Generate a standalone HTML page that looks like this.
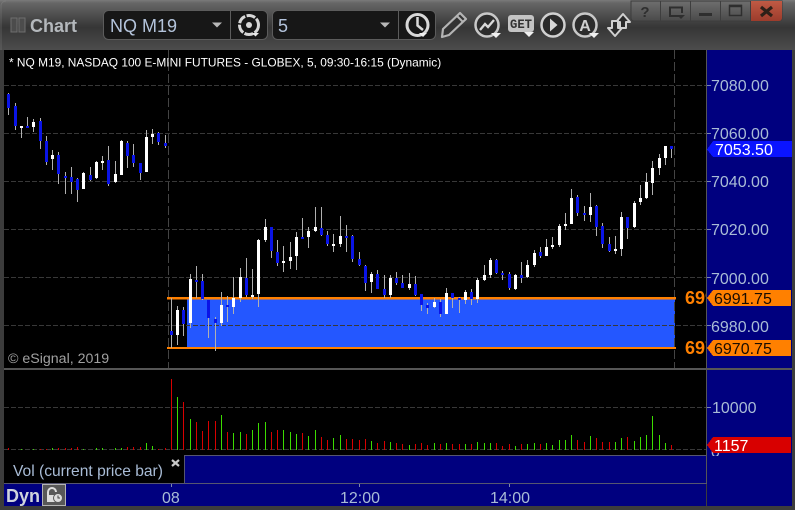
<!DOCTYPE html>
<html><head><meta charset="utf-8"><style>
html,body{margin:0;padding:0;background:#3c3c3c}
svg{display:block;font-family:"Liberation Sans",sans-serif}
</style></head><body>
<svg width="795" height="510" viewBox="0 0 795 510" xmlns="http://www.w3.org/2000/svg">
<defs>
<linearGradient id="tb" x1="0" y1="0" x2="0" y2="1"><stop offset="0" stop-color="#7a7a7a"/><stop offset=".06" stop-color="#666"/><stop offset=".5" stop-color="#3a3a3a"/><stop offset=".56" stop-color="#363636"/><stop offset="1" stop-color="#4c4c4c"/></linearGradient>
<linearGradient id="wb" x1="0" y1="0" x2="0" y2="1"><stop offset="0" stop-color="#6e6e6e"/><stop offset="1" stop-color="#4a4a4a"/></linearGradient>
<linearGradient id="wr" x1="0" y1="0" x2="0" y2="1"><stop offset="0" stop-color="#c05a44"/><stop offset="1" stop-color="#9c3c2c"/></linearGradient>
<clipPath id="ax"><rect x="0" y="50" width="706" height="320"/></clipPath>
</defs>
<rect width="795" height="510" fill="#3c3c3c"/>
<rect width="795" height="50" fill="url(#tb)"/>
<rect x="4" y="50" width="702" height="318" fill="#000"/>
<rect x="4" y="370" width="702" height="85" fill="#000"/>
<rect x="4" y="455" width="181" height="28" fill="#000"/>
<rect x="185" y="456" width="521" height="27" fill="#00007f"/>
<rect x="4" y="484" width="702" height="22" fill="#00007f"/>
<rect x="707" y="50" width="85" height="456" fill="#00007f"/>
<rect x="4" y="368" width="788" height="2" fill="#565656"/>
<rect x="706" y="50" width="1" height="434" fill="#565656"/>
<rect x="4" y="483" width="703" height="1" fill="#565670"/>
<rect x="184" y="455" width="522" height="1" fill="#565670"/>
<rect x="184" y="455" width="1" height="28" fill="#565670"/>

<g shape-rendering="crispEdges">
<rect x="187" y="299" width="488" height="48" fill="#2457ff"/>
<path d="M4 85.5H706M4 133.5H706M4 181.5H706M4 229.5H706M4 277.5H706M4 325.5H706M4 407.5H706M4 449.5H706" stroke="#383838" stroke-dasharray="5 2" fill="none"/>
<path d="M168.5 50V368M674.5 50V368" stroke="#444" stroke-dasharray="9 3" fill="none"/>
<rect x="167" y="297" width="509" height="2.4" fill="#ff8000"/>
<rect x="167" y="347" width="509" height="2" fill="#ff8000"/>
<path stroke="#b0b0b0" fill="none" d="M8.5 93V115M15.5 103V130M21.5 126V138M27.5 117V128M33.5 119V132M40.5 118V149M46.5 136V165M52.5 150V170M58.5 152V184M65.5 172V194M71.5 167V194M77.5 178V202M83.5 172V189M90.5 167V181M96.5 161V179M102.5 156V170M108.5 146V186M115.5 161V183M121.5 140V175M127.5 141V168M133.5 144V167M140.5 163V180M146.5 130V172M152.5 129V144M158.5 132V145M165.5 135V148M171.5 298V348M177.5 306V345M183.5 307V336M190.5 274V328M196.5 266V298M202.5 274V300M208.5 300V338M215.5 317V351M221.5 292V326M227.5 296V322M233.5 277V314M240.5 268V302M246.5 258V297M252.5 269V299M258.5 239V307M265.5 219V242M271.5 227V258M277.5 240V266M283.5 246V272M290.5 242V269M296.5 232V270M302.5 218V239M308.5 227V248M315.5 207V232M321.5 207V236M327.5 231V246M333.5 234V252M340.5 216V247M346.5 225V252M352.5 235V262M359.5 252V266M365.5 265V291M371.5 272V293M377.5 270V289M384.5 275V298M390.5 275V298M396.5 272V285M402.5 275V288M409.5 273V290M415.5 276V296M421.5 294V311M427.5 303V314M434.5 298V308M440.5 299V317M446.5 288V314M452.5 293V308M459.5 297V313M465.5 290V304M471.5 289V305M477.5 278V303M484.5 265V281M490.5 258V278M496.5 259V274M502.5 271V280M509.5 272V290M515.5 274V290M521.5 262V283M527.5 260V278M534.5 250V267M540.5 247V258M546.5 239V256M552.5 237V249M559.5 224V247M565.5 213V230M571.5 189V224M577.5 195V216M584.5 206V221M590.5 193V222M596.5 205V236M602.5 223V248M609.5 237V252M615.5 236V254M621.5 212V256M627.5 217V239M634.5 201V228M640.5 185V205M646.5 173V199M652.5 161V195M659.5 154V175M665.5 146V165M671.5 146V158"/>
<path fill="#0a14e6" d="M7 94h3V108H7zM14 106h3V126H14zM26 126h3V128H26zM39 121h3V141H39zM45 141h3V162H45zM57 155h3V174H57zM64 176h3V178H64zM70 177h3V182H70zM76 179h3V190H76zM89 175h3V180H89zM107 160h3V184H107zM126 143h3V156H126zM132 155h3V163H132zM139 163h3V173H139zM157 133h3V142H157zM164 143h3V146H164zM170 331h3V335H170zM182 310h3V324H182zM195 280h3V282H195zM201 281h3V299H201zM207 300h3V318H207zM214 319h3V323H214zM226 305h3V307H226zM245 278h3V295H245zM270 227h3V251H270zM276 252h3V263H276zM301 237h3V239H301zM320 228h3V235H320zM326 235h3V244H326zM345 236h3V238H345zM351 236h3V259H351zM358 259h3V265H358zM364 266h3V283H364zM376 274h3V289H376zM383 289h3V295H383zM395 278h3V283H395zM401 283h3V288H401zM414 284h3V295H414zM420 294h3V305H420zM426 305h3V308H426zM439 302h3V314H439zM451 293h3V298H451zM458 298h3V300H458zM470 292h3V299H470zM495 260h3V273H495zM501 273h3V275H501zM508 274h3V288H508zM520 275h3V278H520zM539 252h3V256H539zM576 197h3V213H576zM583 213h3V215H583zM595 206h3V227H595zM601 226h3V244H601zM608 244h3V251H608zM626 217h3V228H626zM670 146h3V149H670z"/>
<path fill="#fff" d="M20 126h3V128H20zM32 122h3V127H32zM51 155h3V159H51zM82 173h3V189H82zM95 162h3V178H95zM101 161h3V163H101zM114 174h3V182H114zM120 141h3V175H120zM145 137h3V172H145zM151 134h3V137H151zM176 310h3V335H176zM189 279h3V323H189zM220 305h3V323H220zM232 298h3V307H232zM239 277h3V298H239zM251 295h3V297H251zM257 240h3V294H257zM264 227h3V240H264zM282 261h3V263H282zM289 257h3V261H289zM295 237h3V256H295zM307 231h3V237H307zM314 227h3V231H314zM332 244h3V246H332zM339 236h3V244H339zM370 274h3V282H370zM389 278h3V295H389zM408 284h3V288H408zM433 302h3V307H433zM445 293h3V314H445zM464 292h3V300H464zM476 280h3V299H476zM483 275h3V280H483zM489 260h3V275H489zM514 275h3V289H514zM526 265h3V277H526zM533 253h3V265H533zM545 247h3V256H545zM551 245h3V247H551zM558 226h3V245H558zM564 224h3V226H564zM570 198h3V224H570zM589 207h3V215H589zM614 249h3V251H614zM620 217h3V249H620zM633 203h3V227H633zM639 198h3V202H639zM645 182h3V198H645zM651 168h3V183H651zM658 158h3V168H658zM664 146h3V158H664z"/>
<path stroke="#d80000" fill="none" d="M8.5 448V450M40.5 449V450M46.5 449V450M52.5 448V450M58.5 448V450M65.5 448V450M71.5 448V450M77.5 447V450M127.5 447V450M133.5 447V450M140.5 447V450M158.5 449V450M165.5 448V450M171.5 379V450M183.5 402V450M196.5 422V450M202.5 431V450M208.5 421V450M215.5 421V450M227.5 432V450M246.5 434V450M271.5 432V450M277.5 430V450M302.5 433V450M321.5 437V450M327.5 440V450M346.5 439V450M352.5 439V450M359.5 440V450M365.5 439V450M377.5 443V450M384.5 441V450M396.5 443V450M402.5 444V450M415.5 444V450M421.5 443V450M427.5 445V450M440.5 444V450M452.5 444V450M459.5 444V450M471.5 444V450M496.5 443V450M502.5 446V450M509.5 444V450M521.5 444V450M540.5 444V450M577.5 440V450M584.5 442V450M596.5 438V450M602.5 442V450M609.5 442V450M627.5 437V450M671.5 445V450"/>
<path stroke="#3cdc00" fill="none" d="M21.5 449V450M33.5 449V450M52.5 448V450M83.5 449V450M96.5 448V450M102.5 448V450M115.5 448V450M121.5 448V450M146.5 443V450M152.5 446V450M177.5 397V450M190.5 419V450M221.5 415V450M233.5 433V450M240.5 432V450M252.5 430V450M258.5 423V450M265.5 422V450M283.5 430V450M290.5 432V450M296.5 434V450M308.5 436V450M315.5 430V450M333.5 438V450M340.5 435V450M371.5 441V450M390.5 442V450M409.5 445V450M434.5 443V450M446.5 443V450M465.5 444V450M477.5 442V450M484.5 443V450M490.5 443V450M515.5 446V450M527.5 444V450M534.5 443V450M546.5 443V450M552.5 445V450M559.5 440V450M565.5 440V450M571.5 435V450M590.5 436V450M615.5 442V450M621.5 438V450M634.5 441V450M640.5 437V450M646.5 435V450M652.5 416V450M659.5 435V450M665.5 443V450"/>
<path stroke="#7c88b0" fill="none" d="M707 85.5h4M707 133.5h4M707 181.5h4M707 229.5h4M707 277.5h4M707 325.5h4M707 407.5h4M171.5 484v3M359.5 484v3M509.5 484v3"/>
<path fill="#0a14ff" d="M707 149.5L713 141H792V157H713z"/>
<path fill="#ff8000" d="M707 298L713 290H791V306H713zM707 348L713 340H791V356H713z"/>
</g>
<text x="711" y="457" font-size="16" fill="#a9bcd6">0</text>
<path fill="#d80000" shape-rendering="crispEdges" d="M707 445L713 437H791V453H713z"/>
<rect x="707" y="456" width="85" height="27" fill="#00007f"/>

<text x="9" y="66.5" font-size="11.9" fill="#fff">* NQ M19, NASDAQ 100 E-MINI FUTURES - GLOBEX, 5, 09:30-16:15 (Dynamic)</text>
<text x="8" y="363" font-size="14.2" fill="#a0a0a0">© eSignal, 2019</text>
<g font-size="16" fill="#a9bcd6">
<text x="711" y="91">7080.00</text>
<text x="711" y="139">7060.00</text>
<text x="711" y="187">7040.00</text>
<text x="711" y="235">7020.00</text>
<text x="711" y="284">7000.00</text>
<text x="711" y="332">6980.00</text>
<text x="712" y="413">10000</text>
<text x="715" y="155" fill="#fff">7053.50</text>
<text x="714" y="304" fill="#1a0c00">6991.75</text>
<text x="714" y="354" fill="#1a0c00">6970.75</text>
<text x="714" y="451" fill="#fff">1157</text>
<text x="162" y="503">08</text>
<text x="340" y="503">12:00</text>
<text x="490" y="503">14:00</text>
<text x="13" y="476" font-size="15.6">Vol (current price bar)</text>
</g>
<g clip-path="url(#ax)" font-size="18" font-weight="bold" fill="#ff8000"><text x="685" y="304">6991.75</text><text x="685" y="354">6970.75</text></g>
<path d="M172 460l7 6M179 460l-7 6" stroke="#c8c8c8" stroke-width="2.2" fill="none"/>
<text x="6" y="502" font-size="18" font-weight="bold" fill="#cfd4dc">Dyn</text>
<rect x="42.5" y="484.5" width="23" height="21" fill="#585858" stroke="#b4b4b4"/>
<path d="M48 502V492a4 4 0 0 1 8 0" stroke="#ddd" stroke-width="2" fill="none"/><rect x="47" y="495" width="9" height="7" fill="#ddd"/><circle cx="58" cy="498" r="4.5" fill="#ddd" stroke="#585858"/><path d="M58 495.500V498h2" stroke="#444" fill="none"/>

<rect x="11" y="18" width="6" height="14" fill="#4c4c4c" stroke="#6e6e6e"/>
<rect x="19" y="18" width="6" height="14" fill="#4c4c4c" stroke="#6e6e6e"/>
<text x="30" y="32" font-size="18" font-weight="bold" fill="#b4b8bc">Chart</text>

<rect x="103.5" y="10.5" width="164" height="29" rx="5" fill="#171717" stroke="#5c5c5c"/>
<path d="M230.5 11V39" stroke="#5c5c5c"/>
<text x="110" y="32" font-size="18" fill="#b4c4dc">NQ M19</text>
<path d="M212 22.5h10l-5 5z" fill="#b8b8b8"/>
<circle cx="249" cy="25" r="9.5" fill="none" stroke="#d8d8d8" stroke-width="3" stroke-dasharray="9 1.5"/>
<circle cx="249" cy="25" r="3" fill="#d8d8d8"/>
<path d="M252 33h7l-3.5 3.5z" fill="#e8e8e8"/>

<rect x="272.5" y="10.5" width="163" height="29" rx="5" fill="#171717" stroke="#5c5c5c"/>
<path d="M398.5 11V39" stroke="#5c5c5c"/>
<text x="278" y="32" font-size="18" fill="#b4c4dc">5</text>
<path d="M380 22.5h10l-5 5z" fill="#b8b8b8"/>
<circle cx="417.5" cy="25" r="10.5" fill="none" stroke="#d8d8d8" stroke-width="3"/>
<path d="M417.5 17V25.5L423 30" fill="none" stroke="#d8d8d8" stroke-width="2.5"/>
<path d="M419 33h8l-4 4z" fill="#f0f0f0"/>

<path d="M442 37l1-8 17-16 6 6-17 16z" fill="#333" stroke="#b4b4b4" stroke-width="2.2" stroke-linejoin="round"/>
<path d="M457 16l6 6" stroke="#b4b4b4" stroke-width="2"/>
<circle cx="487" cy="25" r="11.5" fill="#2c2c2c" stroke="#c8c8c8" stroke-width="2.5"/>
<path d="M480 30l5-6 3 3 6-7" fill="none" stroke="#d8d8d8" stroke-width="2.3"/>
<path d="M491 33h10l-5 5z" fill="#f0f0f0"/>
<rect x="508" y="15" width="26" height="17" rx="3" fill="#c4c4c4"/>
<text x="510" y="28" font-size="13" font-weight="bold" fill="#333" font-family="Liberation Mono" textLength="22" lengthAdjust="spacingAndGlyphs">GET</text>
<path d="M524 32h10l-5 5z" fill="#f0f0f0"/>
<circle cx="553" cy="25" r="11.5" fill="#2a2a2a" stroke="#d0d0d0" stroke-width="2.5"/>
<path d="M550 18.5l7.5 6.5-7.500 6.500z" fill="#d8d8d8"/>
<circle cx="585" cy="25" r="11.5" fill="#2c2c2c" stroke="#c8c8c8" stroke-width="2.5"/>
<text x="585" y="31" font-size="16" font-weight="bold" fill="#d0d0d0" text-anchor="middle">A</text>
<path d="M589 33h10l-5 5z" fill="#f0f0f0"/>

<path d="M631 1H782V18a3 3 0 0 1-3 3H634a3 3 0 0 1-3-3z" fill="url(#wb)" stroke="#3c3c3c"/>
<path d="M750.5 1H782V18a3 3 0 0 1-3 3H750.5z" fill="url(#wr)"/>
<path d="M660.5 1V21M690.5 1V21M720.5 1V21M750.5 1V21" stroke="#3e3e3e"/>
<text x="645" y="17" font-size="15" font-weight="bold" fill="#2e2e2e" text-anchor="middle">?</text>
<path d="M680 16h-10V7.5h12V13" fill="none" stroke="#2e2e2e" stroke-width="2"/>
<path d="M677 15h8l-4 4z" fill="#2e2e2e"/>
<rect x="699" y="13" width="13" height="3" fill="#2e2e2e"/>
<rect x="729.5" y="5.5" width="12" height="10" fill="none" stroke="#2e2e2e" stroke-width="1.5"/>
<path d="M729 6h13" stroke="#2e2e2e" stroke-width="2.5"/>
<path d="M761 7l11 9M772 7l-11 9" stroke="#2e2018" stroke-width="3.2"/>

<path d="M620 28v-6h-4l7-8 7 8h-4v6z" fill="#2a2a2a" stroke="#d0d0d0" stroke-width="2" stroke-linejoin="round"/>
<path d="M612 21v7h-4l7 8 7-8h-4v-7z" fill="#2a2a2a" stroke="#d0d0d0" stroke-width="2" stroke-linejoin="round"/>
<path d="M1 50V5a5 5 0 0 1 5-4" fill="none" stroke="#8a8a8a" opacity=".4"/>
</svg>
</body></html>
